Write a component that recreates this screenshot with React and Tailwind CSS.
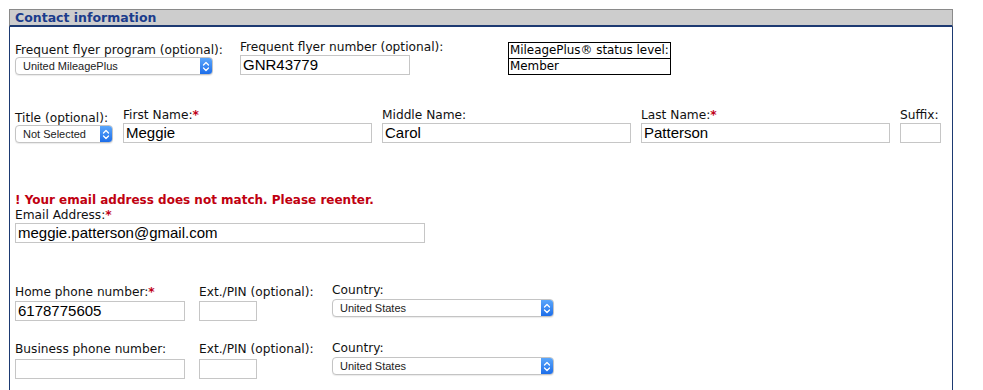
import React from "react";

const lbl = "font-['DejaVu_Sans',sans-serif] text-[12.2px] leading-[14px] text-[#111] whitespace-nowrap";
const inp = "h-[20px] border border-[#c6c6c6] bg-white font-['Liberation_Sans',Arial,sans-serif] text-[15px] leading-[18px] text-black px-[2px] box-border overflow-hidden whitespace-nowrap";

function Star() {
  return <span className="text-[#c00018] font-bold">*</span>;
}

function Select({ value, w }) {
  return (
    <div
      className={`${w} h-[18px] flex items-stretch rounded-[4px] border border-[#c4c4c4] bg-white shadow-[0_1px_1px_rgba(0,0,0,0.08)] box-border overflow-hidden`}
    >
      <div className="flex-1 pl-[7px] font-['Liberation_Sans',Arial,sans-serif] text-[11px] leading-[16px] text-[#222] whitespace-nowrap overflow-hidden">
        {value}
      </div>
      <div className="w-[12px] bg-gradient-to-b from-[#5aa6fb] to-[#1c6de9] flex items-center justify-center">
        <svg width="8" height="11" viewBox="0 0 8 11">
          <path d="M1.5 4 L4 1.5 L6.5 4" stroke="white" strokeWidth="1.3" fill="none" strokeLinecap="round" strokeLinejoin="round" />
          <path d="M1.5 7 L4 9.5 L6.5 7" stroke="white" strokeWidth="1.3" fill="none" strokeLinecap="round" strokeLinejoin="round" />
        </svg>
      </div>
    </div>
  );
}

export default function App() {
  return (
    <div className="w-[983px] h-[390px] bg-white overflow-hidden">
      <div className="ml-[9px] pt-[9px] w-[944px]">
        <div className="h-[18px] bg-[#cdcdcd] border-t border-x border-[#8a8a8a] border-b-2 border-b-[#1d3a72] box-border pl-[5px] pt-[1px] font-['DejaVu_Sans',sans-serif] font-bold text-[12.5px] leading-[14px] text-[#1b3c8c]">
          Contact information
        </div>
        <div className="border-x border-[#1d3a72] h-[400px] pl-[5px]">
          {/* Row 1 */}
          <div className="flex items-end pt-[13px]">
            <div className="flex flex-col w-[225px]">
              <div className={lbl}>Frequent flyer program (optional):</div>
              <Select value="United MileagePlus" w="w-[198px]" />
            </div>
            <div className="flex flex-col w-[268px]">
              <div className={`${lbl} mb-[1px]`}>Frequent flyer number (optional):</div>
              <div className={`${inp} w-[170px]`}>GNR43779</div>
            </div>
            <div className="border border-black font-['DejaVu_Sans',sans-serif] text-[11.9px] leading-[15px] text-black whitespace-nowrap">
              <div className="px-[1px] border-b border-black">MileagePlus® status level:</div>
              <div className="px-[1px]">Member</div>
            </div>
          </div>

          {/* Row 2 */}
          <div className="flex items-end gap-[10px] mt-[33px]">
            <div className="flex flex-col">
              <div className={lbl}>Title (optional):</div>
              <Select value="Not Selected" w="w-[98px]" />
            </div>
            <div className="flex flex-col">
              <div className={`${lbl} mb-[1px]`}>First Name:<Star /></div>
              <div className={`${inp} w-[249px]`}>Meggie</div>
            </div>
            <div className="flex flex-col">
              <div className={`${lbl} mb-[1px]`}>Middle Name:</div>
              <div className={`${inp} w-[249px]`}>Carol</div>
            </div>
            <div className="flex flex-col">
              <div className={`${lbl} mb-[1px]`}>Last Name:<Star /></div>
              <div className={`${inp} w-[249px]`}>Patterson</div>
            </div>
            <div className="flex flex-col">
              <div className={`${lbl} mb-[1px]`}>Suffix:</div>
              <div className={`${inp} w-[41px]`}></div>
            </div>
          </div>

          {/* Email */}
          <div className="mt-[50px] font-['DejaVu_Sans',sans-serif] font-bold text-[12px] leading-[14px] text-[#c00010] whitespace-nowrap">
            ! Your email address does not match. Please reenter.
          </div>
          <div className={`${lbl} mt-[1px]`}>Email Address:<Star /></div>
          <div className={`${inp} w-[410px] mt-[1px]`}>meggie.patterson@gmail.com</div>

          {/* Home phone */}
          <div className="flex items-start mt-[40px]">
            <div className="flex flex-col pt-[2px] w-[184px]">
              <div className={`${lbl} mb-[2px]`}>Home phone number:<Star /></div>
              <div className={`${inp} w-[170px]`}>6178775605</div>
            </div>
            <div className="flex flex-col pt-[2px] w-[133px]">
              <div className={`${lbl} mb-[2px]`}>Ext./PIN (optional):</div>
              <div className={`${inp} w-[58px]`}></div>
            </div>
            <div className="flex flex-col">
              <div className={`${lbl} mb-[2px]`}>Country:</div>
              <Select value="United States" w="w-[222px]" />
            </div>
          </div>

          {/* Business phone */}
          <div className="flex items-start mt-[20px]">
            <div className="flex flex-col pt-[1px] w-[184px]">
              <div className={`${lbl} mb-[3px]`}>Business phone number:</div>
              <div className={`${inp} w-[170px]`}></div>
            </div>
            <div className="flex flex-col pt-[1px] w-[133px]">
              <div className={`${lbl} mb-[3px]`}>Ext./PIN (optional):</div>
              <div className={`${inp} w-[58px]`}></div>
            </div>
            <div className="flex flex-col">
              <div className={`${lbl} mb-[2px]`}>Country:</div>
              <Select value="United States" w="w-[222px]" />
            </div>
          </div>
        </div>
      </div>
    </div>
  );
}
